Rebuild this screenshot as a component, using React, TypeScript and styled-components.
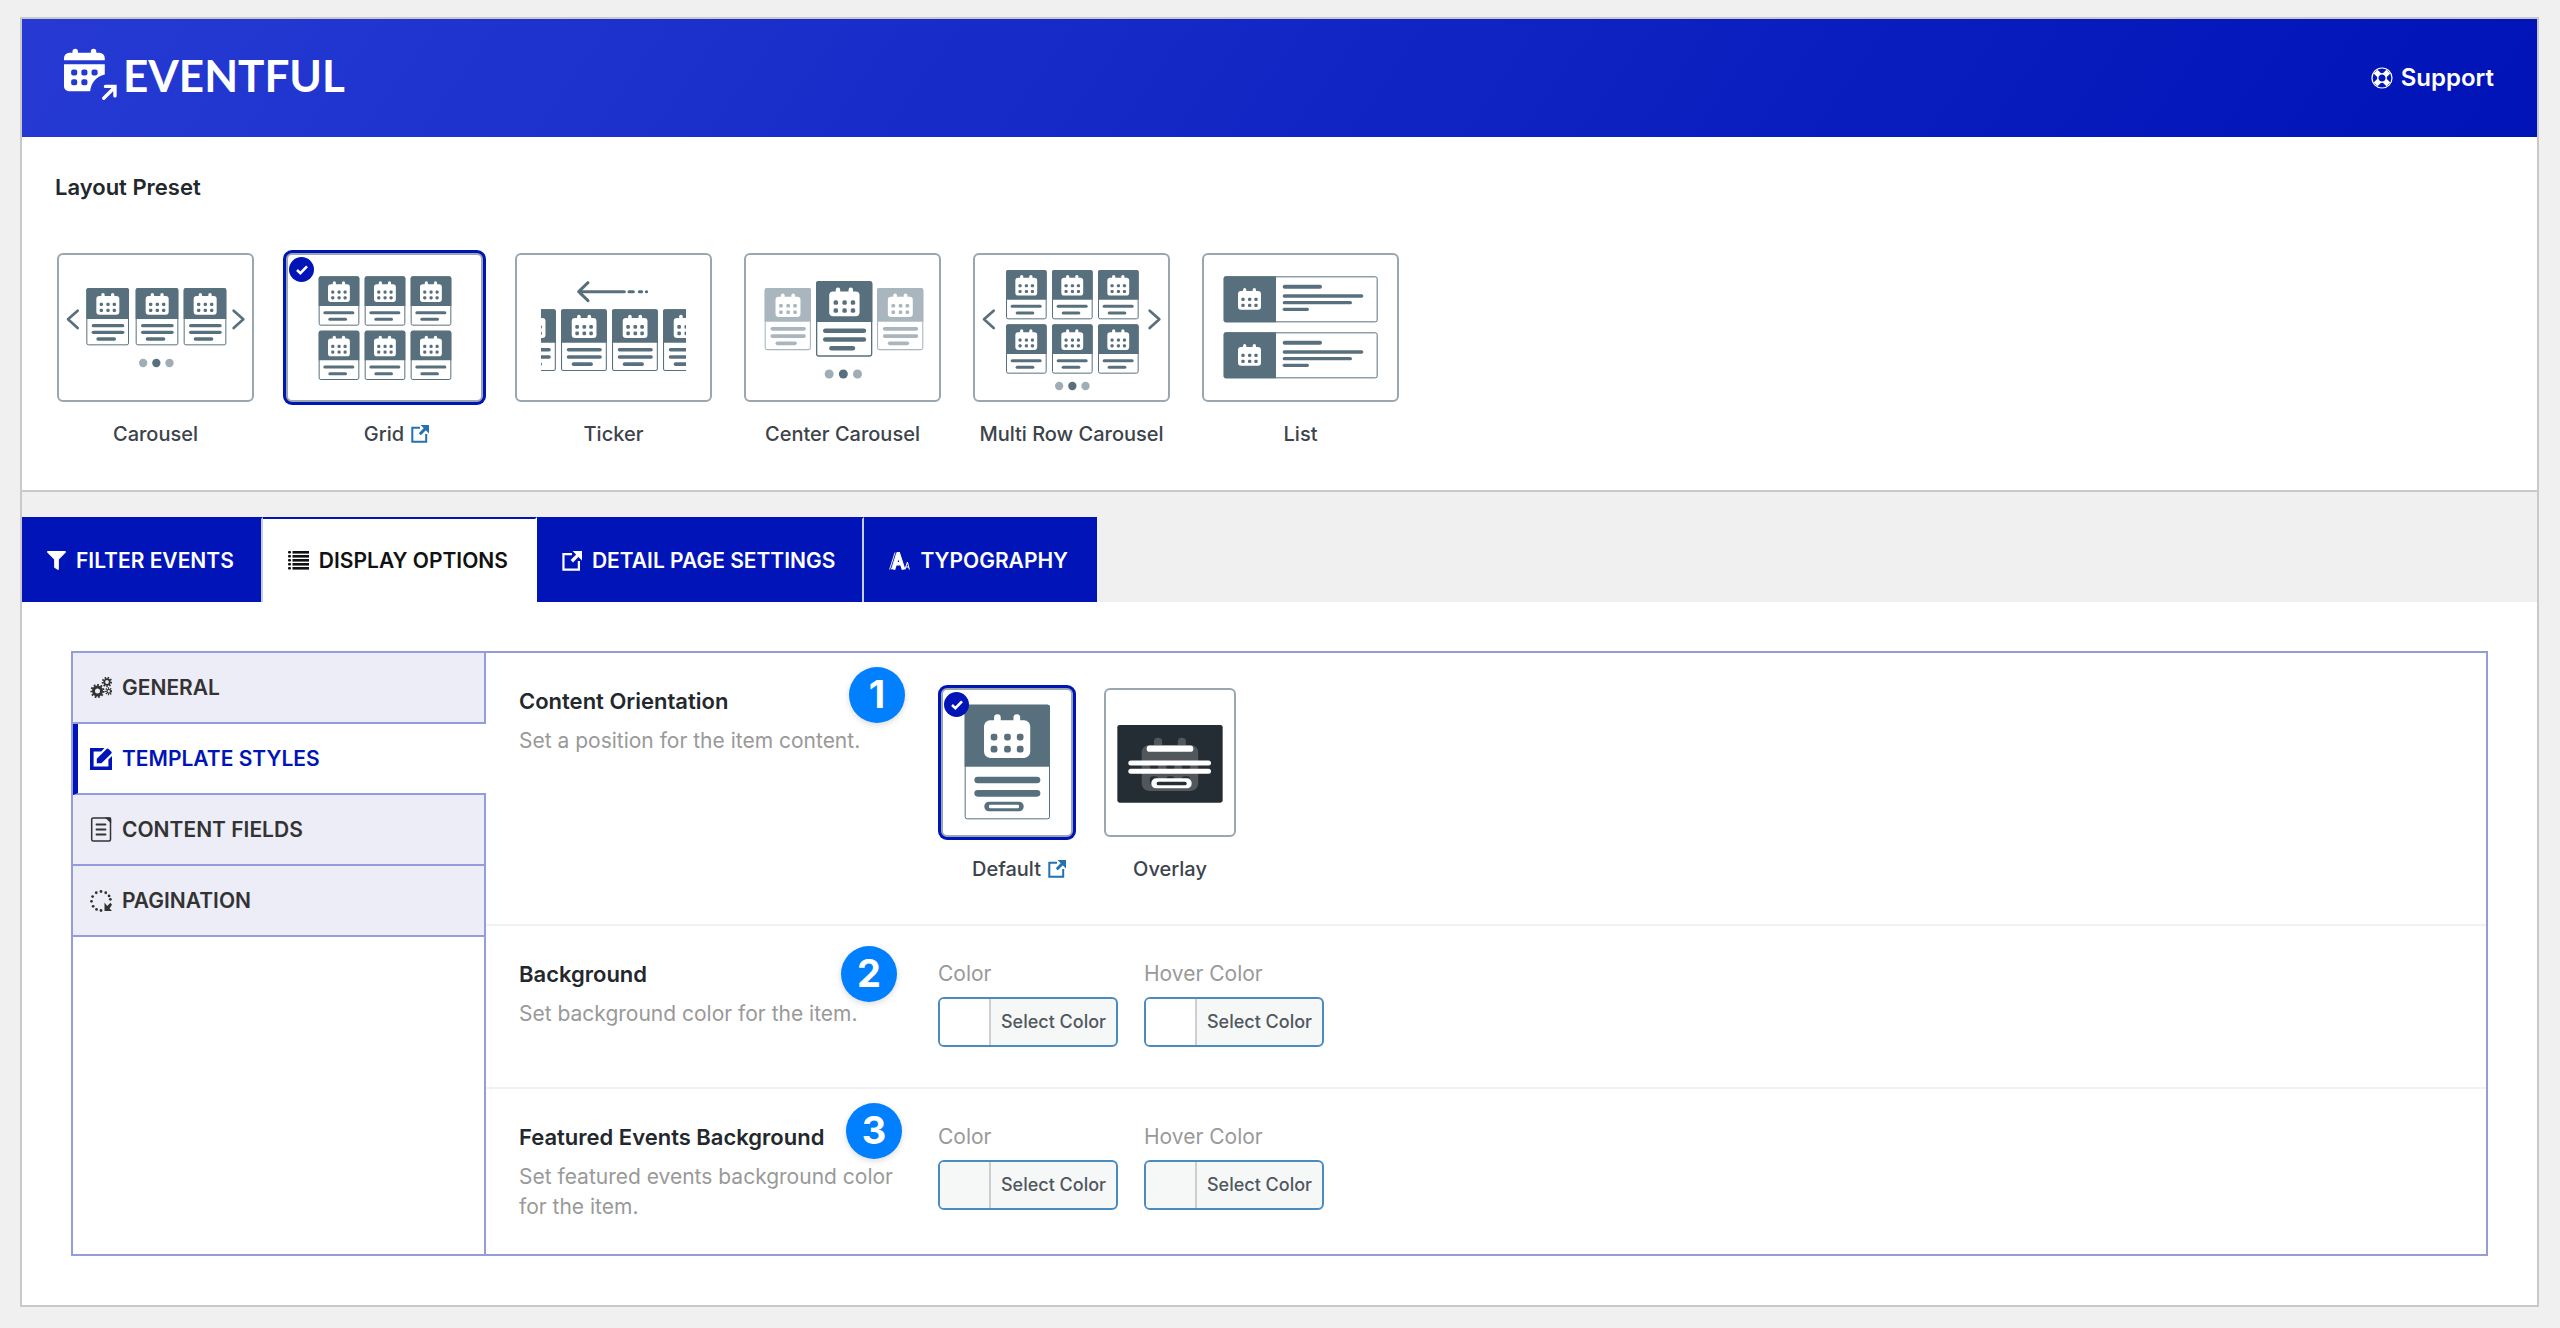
import React, { useState } from "react";
import styled, { createGlobalStyle, css } from "styled-components";
import { FaFilter } from "react-icons/fa";

const navy = "#0014b8";
const slate = "#58707d";
const line = "#959cde";

const GlobalStyle = createGlobalStyle`
  *, *::before, *::after { box-sizing: border-box; }
  body {
    margin: 0;
    background: #f0f0f0;
    color: #23282d;
    font-family: Inter, "Liberation Sans", sans-serif;
    font-size: 21px;
    line-height: 30px;
  }
  button { font: inherit; color: inherit; cursor: pointer; }
  svg { display: block; flex: none; }
`;

const Page = styled.main`
  padding: 17px 21px 22px 20px;
`;

const Panel = styled.div`
  border: 2px solid #c9c9cc;
`;

const Header = styled.header`
  display: flex;
  align-items: center;
  justify-content: space-between;
  height: 118px;
  padding: 0 43px 0 42px;
  color: #fff;
  background: linear-gradient(125deg, #263ad3 0%, ${navy} 97%);
`;

const Brand = styled.div`
  display: flex;
  align-items: center;
  gap: 6px;
  padding-bottom: 7px;
  font-family: Lato, "Liberation Sans", sans-serif;
  font-size: 44px;
  font-weight: 700;
  line-height: 52px;
`;

const SupportLink = styled.a`
  display: flex;
  align-items: center;
  gap: 8px;
  color: #fff;
  font-size: 24px;
  font-weight: 600;
  text-decoration: none;
`;

const PresetSection = styled.section`
  padding: 35px 33px 41px;
  background: #fff;
  border-bottom: 2px solid #c9c9cc;
`;

const Title = styled.h2`
  margin: 0;
  font-size: 22px;
  font-weight: 600;
  line-height: 30px;
`;

const PresetList = styled.div`
  display: flex;
  flex-wrap: wrap;
  gap: 32px;
  margin-top: 51px;
  padding-left: 2px;
`;

const OptionLabel = styled.label<{ $width: number }>`
  position: relative;
  width: ${(p) => p.$width}px;
  display: flex;
  flex-direction: column;
  gap: 17px;
  cursor: pointer;
`;

const HiddenRadio = styled.input`
  position: absolute;
  width: 1px;
  height: 1px;
  margin: 0;
  opacity: 0;
`;

const Art = styled.span<{ $selected: boolean }>`
  display: block;
  height: 149px;
  border: 2px solid #99a7b1;
  border-radius: 6px;
  background: #fff;
  ${(p) => p.$selected && css`box-shadow: 0 0 0 3px ${navy};`}
  svg { margin: -2px; }
`;

const Check = styled.span`
  position: absolute;
  top: 4px;
  left: 3px;
  width: 25px;
  height: 25px;
  display: grid;
  place-items: center;
  border-radius: 50%;
  background: ${navy};
`;

const Caption = styled.span<{ $linked: boolean }>`
  display: flex;
  align-items: center;
  justify-content: center;
  gap: 7px;
  padding-left: ${(p) => (p.$linked ? 24 : 0)}px;
  color: #3c434a;
  font-size: 20px;
  font-weight: 500;
  white-space: nowrap;
`;

const DemoLink = styled.a`
  color: #2271b1;
`;

const TabBar = styled.div`
  display: flex;
  padding-top: 25px;
`;

const Tab = styled.button<{ $active: boolean }>`
  display: flex;
  align-items: center;
  gap: 10px;
  height: 85px;
  padding: 0 27px 0 25px;
  border: 0;
  border-top: 2px solid ${navy};
  border-right: 2px solid ${(p) => (p.$active ? "#fff" : "#c9cce8")};
  font-size: 21px;
  font-weight: 600;
  white-space: nowrap;
  color: ${(p) => (p.$active ? "#111" : "#fff")};
  background: ${(p) => (p.$active ? "#fff" : navy)};
  &:last-child { border-right-color: ${navy}; }
`;

const TabContent = styled.section`
  padding: 49px;
  background: #fff;
`;

const Settings = styled.div`
  display: grid;
  grid-template-columns: 413px minmax(0, 1fr);
  border: 2px solid ${line};
`;

const Sidebar = styled.nav`
  display: flex;
  flex-direction: column;
`;

const SideItem = styled.button<{ $active: boolean }>`
  display: flex;
  align-items: center;
  gap: 10px;
  height: 71px;
  padding: 0 0 0 ${(p) => (p.$active ? 12 : 17)}px;
  border: 0 solid ${line};
  border-width: 0 2px 2px 0;
  font-size: 21px;
  font-weight: 600;
  text-align: left;
  color: #333;
  background: #ededf8;
  ${(p) =>
    p.$active &&
    css`
      border-right-width: 0;
      border-left: 5px solid ${navy};
      background: #fff;
      color: ${navy};
    `}
`;

const SideFill = styled.div`
  flex: 1;
  border-right: 2px solid ${line};
`;

const Fields = styled.div`
  display: flex;
  flex-direction: column;
`;

const FieldRow = styled.div`
  display: grid;
  grid-template-columns: 379px minmax(0, 1fr);
  gap: 40px;
  padding: 33px 33px 32px;
  border-bottom: 2px solid #f2f2f2;
  &:last-child { border-bottom: 0; }
`;

const FieldIntro = styled.div`
  position: relative;
`;

const Description = styled.p`
  margin: 10px 0 0;
  color: #999;
`;

const StepBadge = styled.span<{ $left: number; $top: number }>`
  position: absolute;
  left: ${(p) => p.$left}px;
  top: ${(p) => p.$top}px;
  width: 56px;
  height: 56px;
  border-radius: 50%;
  background: #007fff;
  box-shadow: 0 2px 6px rgba(0, 0, 0, 0.15);
  color: #fff;
  font-size: 38px;
  font-weight: 700;
  line-height: 54px;
  text-align: center;
`;

const Choices = styled.div`
  display: flex;
  gap: 31px;
  padding: 2px 3px 8px;
`;

const Colors = styled.div`
  display: flex;
  gap: 26px;
  padding-bottom: 8px;
`;

const ColorField = styled.div`
  display: flex;
  flex-direction: column;
  gap: 8px;
  color: #999;
`;

const ColorButton = styled.button`
  display: flex;
  width: 180px;
  height: 50px;
  padding: 0;
  overflow: hidden;
  border: 2px solid #4a8cc0;
  border-radius: 6px;
  background: #f6f7f7;
  color: #50575e;
  font-size: 18px;
  font-weight: 500;
  line-height: 46px;
`;

const Swatch = styled.span<{ $color: string }>`
  width: 51px;
  align-self: stretch;
  border-right: 2px solid #ccced0;
  background: ${(p) => p.$color};
`;

const ColorText = styled.span`
  flex: 1;
  text-align: center;
`;

/* ---------- drawings ---------- */

function Calendar({ x, y, s = 1, fill = "#fff", dot = slate }: { x: number; y: number; s?: number; fill?: string; dot?: string }) {
  return (
    <g transform={`translate(${x} ${y}) scale(${s})`}>
      <rect y="9" width="69" height="56" rx="9" fill={fill} />
      <rect x="15" width="10" height="16" rx="5" fill={fill} />
      <rect x="44" width="10" height="16" rx="5" fill={fill} />
      {[34, 52].map((cy) =>
        [15, 35, 54].map((cx) => <rect key={`${cx}-${cy}`} x={cx - 5} y={cy - 5} width="10" height="10" rx="3.5" fill={dot} />)
      )}
    </g>
  );
}

function Bar({ x, y, to, w = 9, color = slate }: { x: number; y: number; to: number; w?: number; color?: string }) {
  return <path d={`M${x + w / 2} ${y}H${to - w / 2}`} stroke={color} strokeWidth={w} strokeLinecap="round" />;
}

function TallCard({ x, y, s = 1, opacity = 1 }: { x: number; y: number; s?: number; opacity?: number }) {
  return (
    <g transform={`translate(${x} ${y}) scale(${s})`} opacity={opacity}>
      <rect x="1.5" y="1.5" width="125" height="169" rx="5" fill="#fff" stroke={slate} strokeWidth="3" />
      <path d="M0 93V6a6 6 0 0 1 6-6H122a6 6 0 0 1 6 6V93Z" fill={slate} />
      <Calendar x={30} y={15} />
      <Bar x={16} y={113} to={114} w={10} />
      <Bar x={16} y={133} to={114} w={10} />
      <Bar x={30} y={153} to={89} w={10} />
    </g>
  );
}

function ShortCard({ x, y }: { x: number; y: number }) {
  return (
    <g transform={`translate(${x} ${y})`}>
      <rect x="1.5" y="1.5" width="119" height="145" rx="5" fill="#fff" stroke={slate} strokeWidth="3" />
      <path d="M0 89V6a6 6 0 0 1 6-6H116a6 6 0 0 1 6 6V89Z" fill={slate} />
      <Calendar x={28} y={15} s={0.95} />
      <Bar x={14} y={109} to={107} />
      <Bar x={29} y={129} to={85} />
    </g>
  );
}

function Dots({ x, y, gap, r }: { x: number; y: number; gap: number; r: number }) {
  return (
    <g fill="#a0adb5">
      <circle cx={x - gap} cy={y} r={r} />
      <circle cx={x} cy={y} r={r} fill={slate} />
      <circle cx={x + gap} cy={y} r={r} />
    </g>
  );
}

function Chevrons({ left, right }: { left: number; right: number }) {
  return (
    <g fill="none" stroke={slate} strokeWidth="8" strokeLinecap="round" strokeLinejoin="round">
      <path d={`M${left + 29} 173l-29 26 29 26`} />
      <path d={`M${right - 29} 173l29 26-29 26`} />
    </g>
  );
}

const rows6 = (x: number, y: number) =>
  [0, 163].map((dy) => [0, 138, 276].map((dx) => <ShortCard key={`${dx}-${dy}`} x={x + dx} y={y + dy} />));

const art: Record<string, React.ReactNode> = {
  Carousel: (
    <>
      <Chevrons left={33} right={559} />
      <TallCard x={88} y={105} />
      <TallCard x={236} y={105} />
      <TallCard x={380} y={105} />
      <Dots x={298} y={330} gap={39.5} r={12.5} />
    </>
  ),
  Grid: <>{rows6(98, 70)}</>,
  Ticker: (
    <>
      <g fill="none" stroke={slate} strokeWidth="9" strokeLinecap="round" strokeLinejoin="round">
        <path d="M219 89l-28 27 28 27M192 116H328M342 116H355M373 116H380M394 116h1" />
      </g>
      <svg x="78" y="160" width="435" height="200" viewBox="78 160 435 200">
        <TallCard x={-15} y={169} s={1.075} />
        <TallCard x={138} y={169} s={1.075} />
        <TallCard x={291} y={169} s={1.075} />
        <TallCard x={444} y={169} s={1.075} />
      </svg>
    </>
  ),
  "Center Carousel": (
    <>
      <TallCard x={62} y={105} s={1.085} opacity={0.5} />
      <TallCard x={399} y={105} s={1.085} opacity={0.5} />
      <TallCard x={216} y={84} s={1.32} />
      <Dots x={298} y={363} gap={42.5} r={13.5} />
    </>
  ),
  "Multi Row Carousel": (
    <>
      <Chevrons left={33} right={559} />
      {rows6(99, 51)}
      <Dots x={298} y={399} gap={39.5} r={12.5} />
    </>
  ),
  List: (
    <>
      {[70, 238].map((y) => (
        <g key={y}>
          <rect x="66.5" y={y + 1.5} width="459" height="135" rx="5" fill="#fff" stroke={slate} strokeWidth="3" />
          <path d={`M222 ${y}H71a6 6 0 0 0-6 6v126a6 6 0 0 0 6 6H222Z`} fill={slate} />
          <Calendar x={108} y={y + 35} />
          <Bar x={242} y={y + 31} to={360} w={12} />
          <Bar x={242} y={y + 59} to={484} w={10} />
          <Bar x={242} y={y + 79} to={450} w={10} />
          <Bar x={242} y={y + 99} to={321} w={10} />
        </g>
      ))}
    </>
  ),
  Default: (
    <>
      <rect x="72.5" y="51.5" width="253" height="341" rx="6" fill="#fff" stroke={slate} strokeWidth="3" />
      <path d="M71 236V56a6 6 0 0 1 6-6H321a6 6 0 0 1 6 6V236Z" fill={slate} />
      <Calendar x={129} y={79} s={2.01} />
      <Bar x={100} y={276} to={298} w={20} />
      <Bar x={100} y={316} to={298} w={20} />
      <rect x="130" y="341" width="118" height="29" rx="14" fill={slate} />
      <rect x="144" y="350" width="90" height="11" rx="4" fill="#fff" />
    </>
  ),
  Overlay: (
    <>
      <rect x="40" y="111" width="316" height="233" rx="7" fill="#252d34" />
      <Calendar x={113} y={149} s={2.46} fill="#52575c" dot="#252d34" />
      <Bar x={128} y={182} to={268} w={19} color="#fff" />
      <Bar x={73} y={225} to={321} w={15} color="#fff" />
      <Bar x={73} y={250} to={321} w={15} color="#fff" />
      <rect x="142" y="271" width="121" height="30" rx="14" fill="#fff" />
      <rect x="158" y="281" width="90" height="11" rx="5" fill="#252d34" />
    </>
  ),
};

const LogoMark = () => (
  <svg width="53" height="53" viewBox="0 0 156 156" fill="#fff" aria-hidden="true">
    <path d="M0 36V30a16 16 0 0 1 16-16H25V10a8 8 0 0 1 16 0v4H79V10a8 8 0 0 1 16 0v4h9a16 16 0 0 1 16 16v6Z" />
    <path
      fillRule="evenodd"
      d="M0 48H120V78C94 84 80 102 77 127H14A14 14 0 0 1 0 113ZM27 63h6a6 6 0 0 1 6 6v6a6 6 0 0 1-6 6h-6a6 6 0 0 1-6-6v-6a6 6 0 0 1 6-6ZM57 63h6a6 6 0 0 1 6 6v6a6 6 0 0 1-6 6h-6a6 6 0 0 1-6-6v-6a6 6 0 0 1 6-6ZM87 63h6a6 6 0 0 1 6 6v6a6 6 0 0 1-6 6h-6a6 6 0 0 1-6-6v-6a6 6 0 0 1 6-6ZM27 92h6a6 6 0 0 1 6 6v6a6 6 0 0 1-6 6h-6a6 6 0 0 1-6-6v-6a6 6 0 0 1 6-6ZM57 92h6a6 6 0 0 1 6 6v6a6 6 0 0 1-6 6h-6a6 6 0 0 1-6-6v-6a6 6 0 0 1 6-6Z"
    />
    <path d="M117 148L148 117M122 113H150V141" fill="none" stroke="#fff" strokeWidth="10" strokeLinecap="round" />
  </svg>
);

const SupportIcon = () => (
  <svg width="22" height="22" viewBox="0 0 22 22" fill="none" stroke="#fff" aria-hidden="true">
    <path d="M4.6 4.6L8.4 8.4M17.4 4.6L13.6 8.4M4.6 17.4L8.4 13.6M17.4 17.4L13.6 13.6" strokeWidth="5.5" />
    <circle cx="11" cy="11" r="10" strokeWidth="1.2" />
    <circle cx="11" cy="11" r="4.2" strokeWidth="1.4" />
  </svg>
);

const ExternalIcon = ({ size = 18 }: { size?: number }) => (
  <svg width={size} height={size} viewBox="0 0 18 18" fill="none" stroke="currentColor" aria-hidden="true">
    <path d="M9 2.8H1.3V16.7H15.2V9" strokeWidth="2" />
    <path d="M8.8 9.2L15 3" strokeWidth="3" />
    <path d="M9.5 0H18V8.5Z" fill="currentColor" stroke="none" />
  </svg>
);

const ListIcon = () => (
  <svg width="21" height="19" viewBox="0 0 21 19" fill="currentColor" aria-hidden="true">
    {[0, 4, 8, 12, 16].map((y) => (
      <g key={y}>
        <rect y={y} width="3" height="2.6" rx="1" />
        <rect x="4.5" y={y} width="16.5" height="2.6" />
      </g>
    ))}
  </svg>
);

const TypeIcon = () => (
  <svg width="21" height="18" viewBox="0 0 21 18" fill="none" stroke="currentColor" aria-hidden="true">
    <path d="M.6 17.5L6 .5M2.4 17.5L7.8 .5" strokeWidth="0.9" />
    <path d="M4.4 17.6L9.4 1.6L14.6 17.6M6.4 11.8H12.6" strokeWidth="3.6" />
    <path d="M16 17.5L18.4 10L20.4 17.5M16.6 15H20" strokeWidth="1" />
  </svg>
);

const Gear = ({ cx, cy, r, w, teeth }: { cx: number; cy: number; r: number; w: number; teeth: number }) => {
  const step = (2 * Math.PI * (r + w / 2)) / teeth;
  return (
    <g fill="none" stroke="currentColor">
      <circle cx={cx} cy={cy} r={r} strokeWidth={w} />
      <circle cx={cx} cy={cy} r={r + w / 2 + 0.6} strokeWidth="2" strokeDasharray={`${step / 2} ${step / 2}`} />
    </g>
  );
};

const GearsIcon = () => (
  <svg width="22" height="22" viewBox="0 0 22 22" aria-hidden="true">
    <Gear cx={7.5} cy={14} r={4} w={3} teeth={10} />
    <Gear cx={17} cy={5} r={2.8} w={1.8} teeth={8} />
    <Gear cx={18.8} cy={14.3} r={1.8} w={1.2} teeth={7} />
  </svg>
);

const EditIcon = () => (
  <svg width="22" height="22" viewBox="0 0 22 22" fill="currentColor" aria-hidden="true">
    <path d="M0 0H14.5L11.2 3.5H3.6V18.4H18.4V11.6L22 8V22H0Z" />
    <path d="M6.8 15.2V10.8L16.6 1A1.4 1.4 0 0 1 18.6 1L21.4 3.8A1.4 1.4 0 0 1 21.4 5.4L11.4 15.2Z" />
  </svg>
);

const DocIcon = () => (
  <svg width="22" height="25" viewBox="0 0 22 25" fill="none" stroke="currentColor" aria-hidden="true">
    <rect x="1.7" y="0.9" width="18.8" height="23" rx="1.5" strokeWidth="1.5" />
    <path d="M15.5 .8H20.8V6Z" fill="currentColor" strokeWidth="0.5" />
    <path d="M6.5 7.5H15.5M6.5 12.5H15.5M6.5 17.5H15.5" strokeWidth="1.8" strokeLinecap="round" />
  </svg>
);

const LoaderIcon = () => (
  <svg width="22" height="22" viewBox="0 0 22 22" fill="currentColor" aria-hidden="true">
    {[0, 30, 58, 80, 180, 208, 236, 268, 298, 330].map((deg) => {
      const a = (deg * Math.PI) / 180;
      return <circle key={deg} cx={11 + 9.5 * Math.sin(a)} cy={11 - 9.5 * Math.cos(a)} r="1.4" />;
    })}
    <path d="M14.5 12.6V21H22L19.6 18.6L22 14.8L20.4 12.8L17.2 16Z" />
  </svg>
);

/* ---------- controls ---------- */

function Option({ name, group, width, selected, onPick }: { name: string; group: string; width: number; selected: boolean; onPick: () => void }) {
  return (
    <OptionLabel $width={width}>
      <HiddenRadio type="radio" name={group} checked={selected} onChange={onPick} />
      <Art $selected={selected}>
        <svg width={width} height="149" viewBox={`0 0 ${width * 3} 447`} aria-hidden="true">
          {art[name]}
        </svg>
      </Art>
      {selected && (
        <Check>
          <svg width="12" height="10" viewBox="0 0 12 10" fill="none" stroke="#fff" strokeWidth="2.6" aria-hidden="true">
            <path d="M1 5L4.4 8.2L11 1.4" />
          </svg>
        </Check>
      )}
      <Caption $linked={selected}>
        {name}
        {selected && (
          <DemoLink href="#demo" aria-label={`${name} demo`}>
            <ExternalIcon />
          </DemoLink>
        )}
      </Caption>
    </OptionLabel>
  );
}

function ColorPick({ id, label, swatch }: { id: string; label: string; swatch: string }) {
  return (
    <ColorField>
      <label htmlFor={id}>{label}</label>
      <ColorButton id={id} type="button">
        <Swatch $color={swatch} />
        <ColorText>Select Color</ColorText>
      </ColorButton>
    </ColorField>
  );
}

const presets = ["Carousel", "Grid", "Ticker", "Center Carousel", "Multi Row Carousel", "List"];

const tabs = [
  { name: "FILTER EVENTS", icon: <FaFilter size={19} /> },
  { name: "DISPLAY OPTIONS", icon: <ListIcon /> },
  { name: "DETAIL PAGE SETTINGS", icon: <ExternalIcon size={20} /> },
  { name: "TYPOGRAPHY", icon: <TypeIcon /> },
];

const sections = [
  { name: "GENERAL", icon: <GearsIcon /> },
  { name: "TEMPLATE STYLES", icon: <EditIcon /> },
  { name: "CONTENT FIELDS", icon: <DocIcon /> },
  { name: "PAGINATION", icon: <LoaderIcon /> },
];

export default function App() {
  const [preset, setPreset] = useState("Grid");
  const [tab, setTab] = useState("DISPLAY OPTIONS");
  const [section, setSection] = useState("TEMPLATE STYLES");
  const [orientation, setOrientation] = useState("Default");

  return (
    <Page>
      <GlobalStyle />
      <Panel>
        <Header>
          <Brand>
            <LogoMark />
            EVENTFUL
          </Brand>
          <SupportLink href="#support">
            <SupportIcon />
            Support
          </SupportLink>
        </Header>

        <PresetSection>
          <Title>Layout Preset</Title>
          <PresetList role="radiogroup" aria-label="Layout Preset">
            {presets.map((p) => (
              <Option key={p} name={p} group="preset" width={197} selected={p === preset} onPick={() => setPreset(p)} />
            ))}
          </PresetList>
        </PresetSection>

        <TabBar role="tablist">
          {tabs.map((t) => (
            <Tab key={t.name} type="button" role="tab" aria-selected={t.name === tab} $active={t.name === tab} onClick={() => setTab(t.name)}>
              {t.icon}
              {t.name}
            </Tab>
          ))}
        </TabBar>

        <TabContent>
          <Settings>
            <Sidebar>
              {sections.map((s) => (
                <SideItem key={s.name} type="button" $active={s.name === section} onClick={() => setSection(s.name)}>
                  {s.icon}
                  {s.name}
                </SideItem>
              ))}
              <SideFill />
            </Sidebar>

            <Fields>
              <FieldRow>
                <FieldIntro>
                  <Title>Content Orientation</Title>
                  <Description>Set a position for the item content.</Description>
                  <StepBadge $left={330} $top={-19}>1</StepBadge>
                </FieldIntro>
                <Choices role="radiogroup" aria-label="Content Orientation">
                  {["Default", "Overlay"].map((o) => (
                    <Option key={o} name={o} group="orientation" width={132} selected={o === orientation} onPick={() => setOrientation(o)} />
                  ))}
                </Choices>
              </FieldRow>

              <FieldRow>
                <FieldIntro>
                  <Title>Background</Title>
                  <Description>Set background color for the item.</Description>
                  <StepBadge $left={322} $top={-13}>2</StepBadge>
                </FieldIntro>
                <Colors>
                  <ColorPick id="bg-color" label="Color" swatch="#fff" />
                  <ColorPick id="bg-hover" label="Hover Color" swatch="#fff" />
                </Colors>
              </FieldRow>

              <FieldRow>
                <FieldIntro>
                  <Title>Featured Events Background</Title>
                  <Description>Set featured events background color for the item.</Description>
                  <StepBadge $left={327} $top={-19}>3</StepBadge>
                </FieldIntro>
                <Colors>
                  <ColorPick id="featured-color" label="Color" swatch="#f6f7f7" />
                  <ColorPick id="featured-hover" label="Hover Color" swatch="#f6f7f7" />
                </Colors>
              </FieldRow>
            </Fields>
          </Settings>
        </TabContent>
      </Panel>
    </Page>
  );
}
